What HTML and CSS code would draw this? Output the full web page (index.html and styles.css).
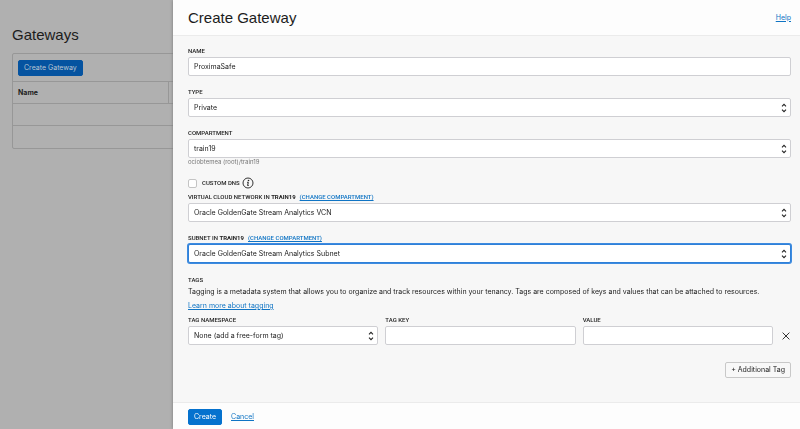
FILE: index.html
```html
<!DOCTYPE html>
<html lang="en">
<head>
<meta charset="utf-8">
<title>Create Gateway</title>
<link rel="stylesheet" href="styles.css">
</head>
<body>
<svg class="defs" aria-hidden="true">
  <symbol id="updown" viewBox="0 0 6 10"><path d="M1 3.4 3 1.4 5 3.4M1 6.6 3 8.6 5 6.6" fill="none" stroke="#222" stroke-width="1.1"/></symbol>
</svg>
<main class="page">
  <h1 class="title">Gateways</h1>
  <section class="list">
    <div class="toolbar"><button class="btn primary dimmed" type="button">Create Gateway</button></div>
    <table class="table">
      <thead><tr><th class="name-col">Name</th><th></th></tr></thead>
      <tbody><tr><td colspan="2"></td></tr><tr><td colspan="2"></td></tr></tbody>
    </table>
  </section>
</main>
<form class="drawer">
  <header class="head">
    <h2 class="title">Create Gateway</h2>
    <a class="help" href="#">Help</a>
  </header>
  <div class="body">
    <div class="field">
      <label class="label" for="name">NAME</label>
      <input class="control" id="name" type="text" value="ProximaSafe">
    </div>
    <div class="field">
      <label class="label" for="type">TYPE</label>
      <div class="select"><select class="control" id="type"><option>Private</option></select><svg class="arrows"><use href="#updown"/></svg></div>
    </div>
    <div class="field">
      <label class="label" for="compartment">COMPARTMENT</label>
      <div class="select"><select class="control" id="compartment"><option>train19</option></select><svg class="arrows"><use href="#updown"/></svg></div>
      <p class="hint">ociobtemea (root)/train19</p>
    </div>
    <div class="check">
      <input class="box" id="dns" type="checkbox">
      <label class="label" for="dns">CUSTOM DNS</label>
      <svg class="info" viewBox="0 0 12 12"><circle cx="6" cy="6" r="5" fill="none" stroke="#333" stroke-width="1"/><circle cx="6.5" cy="3.5" r=".8" fill="#222"/><path d="M5.1 5.3h1.2l-.7 3.2h1.1" fill="none" stroke="#222" stroke-width="1"/></svg>
    </div>
    <div class="field">
      <div class="label-row"><label class="label" for="vcn">VIRTUAL CLOUD NETWORK IN <b>TRAIN19</b></label><a class="label" href="#">(CHANGE COMPARTMENT)</a></div>
      <div class="select"><select class="control" id="vcn"><option>Oracle GoldenGate Stream Analytics VCN</option></select><svg class="arrows"><use href="#updown"/></svg></div>
    </div>
    <div class="field">
      <div class="label-row"><label class="label" for="subnet">SUBNET IN <b>TRAIN19</b></label><a class="label" href="#">(CHANGE COMPARTMENT)</a></div>
      <div class="select"><select class="control active" id="subnet"><option>Oracle GoldenGate Stream Analytics Subnet</option></select><svg class="arrows"><use href="#updown"/></svg></div>
    </div>
    <section class="tags">
      <h3 class="label">TAGS</h3>
      <p class="text">Tagging is a metadata system that allows you to organize and track resources within your tenancy. Tags are composed of keys and values that can be attached to resources.</p>
      <a class="learn" href="#">Learn more about tagging</a>
      <div class="tag-row">
        <div class="tag-field">
          <label class="label" for="namespace">TAG NAMESPACE</label>
          <div class="select"><select class="control" id="namespace"><option>None (add a free-form tag)</option></select><svg class="arrows"><use href="#updown"/></svg></div>
        </div>
        <div class="tag-field"><label class="label" for="key">TAG KEY</label><input class="control" id="key" type="text"></div>
        <div class="tag-field"><label class="label" for="value">VALUE</label><input class="control" id="value" type="text"></div>
        <button class="remove" type="button" aria-label="Remove tag"><svg viewBox="0 0 8 8"><path d="M.6.6l6.8 6.8M7.4.6.6 7.4" fill="none" stroke="#333" stroke-width="1"/></svg></button>
      </div>
      <button class="btn add" type="button">+ Additional Tag</button>
    </section>
  </div>
  <footer class="foot">
    <button class="btn primary" type="submit">Create</button>
    <a href="#">Cancel</a>
  </footer>
</form>
</body>
</html>
```
FILE: styles.css
```css
* { box-sizing: border-box; }
body {
  margin: 0;
  background: #b0b0b0;
  color: #222;
  font: 7px/10px Inter, "Liberation Sans", sans-serif;
}
h1, h2, h3, p { margin: 0; }
a { color: #0f74c4; text-decoration: underline; text-underline-offset: 1px; }
button, input, select { font: inherit; color: inherit; }
.defs { position: absolute; width: 0; height: 0; }
.title {
  color: #1c1c1c;
  font: 15px/20px "Liberation Sans", Arial, sans-serif;
}

.page { padding: 25px 12px; }
.list { margin-top: 8px; border: 1px solid #979797; border-radius: 2px; }
.toolbar { padding: 6px 5px 5px; }
.table { width: 100%; border-collapse: collapse; }
.table th, .table td { height: 22px; padding: 0 5px; border-top: 1px solid #979797; text-align: left; }
.table th { color: #1c1c1c; font-weight: 700; }
.name-col { width: 155px; border-right: 1px solid #979797; }

.btn {
  display: block;
  height: 16px;
  padding: 0 5px;
  border: 1px solid #c8c8c8;
  border-radius: 2px;
  background: #f8f8f8;
}
.primary { border-color: #0572ce; background: #0572ce; color: #fff; }
.dimmed { border-color: #0553a0; background: #0553a0; color: #b9c5d2; }

.drawer {
  position: fixed;
  inset: 0 0 0 173px;
  display: flex;
  flex-direction: column;
  background: #f7f7f7;
  box-shadow: 0 0 3px #777;
}
.head {
  display: flex;
  align-items: center;
  justify-content: space-between;
  height: 36px;
  padding: 0 9px 0 15px;
  border-bottom: 1px solid #ebebeb;
  background: #fdfdfd;
}
.body { flex: 1; padding: 10px 9px 0 15px; }
.field { margin-bottom: 11px; }
.label {
  display: block;
  margin-bottom: 1px;
  color: #222;
  font: 500 6px/10px Roboto, "Liberation Sans", sans-serif;
}
a.label { color: #0f74c4; }
.label-row { display: flex; gap: 4px; }
.control {
  display: block;
  width: 100%;
  height: 19px;
  padding: 0 5px;
  border: 1px solid #cfcfd3;
  border-radius: 2px;
  background: #fff;
  outline: 0;
  appearance: none;
}
.active { border-color: #2f80d8; box-shadow: 0 0 0 1px #3d8be0; }
.select { position: relative; }
.arrows { position: absolute; top: 5px; right: 4px; width: 6px; height: 10px; pointer-events: none; }
.hint { color: #777; font-size: 6px; line-height: 8px; }
.check { display: flex; align-items: center; gap: 2px; height: 12px; margin: 11px 0 3px; }
.check .label { margin: 0; }
.box {
  width: 9px;
  height: 9px;
  margin: 0 3px 0 0;
  border: 1px solid #c4c4c4;
  border-radius: 2px;
  background: #fff;
  appearance: none;
}
.info { width: 12px; height: 12px; }

.tags { padding-top: 1px; }
.text { padding-top: 1px; }
.learn { display: inline-block; margin: 4px 0; }
.tag-row { display: grid; grid-template-columns: 1fr 1fr 1fr 11px; gap: 7px; align-items: end; }
.remove {
  display: flex;
  align-items: center;
  justify-content: flex-end;
  height: 19px;
  padding: 0 1px 0 0;
  border: 0;
  background: none;
}
.remove svg { width: 8px; height: 8px; }
.add { margin: 17px 0 0 auto; }
.foot {
  display: flex;
  align-items: center;
  gap: 9px;
  padding: 6px 15px 4px;
  border-top: 1px solid #ebebeb;
  background: #fdfdfd;
}
```
